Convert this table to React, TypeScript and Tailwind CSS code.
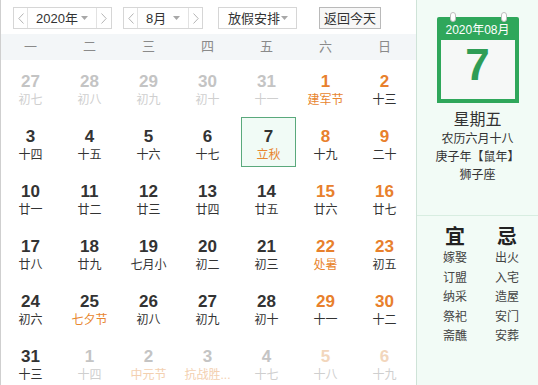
import React from 'react';

type Cell = [number, string, string, string];

// [day, lunar, number style, lunar style]
const rows: Cell[][] = [
  [[27, '初七', 'g', 'g'], [28, '初八', 'g', 'g'], [29, '初九', 'g', 'g'], [30, '初十', 'g', 'g'], [31, '十一', 'g', 'g'], [1, '建军节', 'w', 'f'], [2, '十三', 'w', 'n']],
  [[3, '十四', 'n', 'n'], [4, '十五', 'n', 'n'], [5, '十六', 'n', 'n'], [6, '十七', 'n', 'n'], [7, '立秋', 'n', 'f'], [8, '十九', 'w', 'n'], [9, '二十', 'w', 'n']],
  [[10, '廿一', 'n', 'n'], [11, '廿二', 'n', 'n'], [12, '廿三', 'n', 'n'], [13, '廿四', 'n', 'n'], [14, '廿五', 'n', 'n'], [15, '廿六', 'w', 'n'], [16, '廿七', 'w', 'n']],
  [[17, '廿八', 'n', 'n'], [18, '廿九', 'n', 'n'], [19, '七月小', 'n', 'n'], [20, '初二', 'n', 'n'], [21, '初三', 'n', 'n'], [22, '处暑', 'w', 'f'], [23, '初五', 'w', 'n']],
  [[24, '初六', 'n', 'n'], [25, '七夕节', 'n', 'f'], [26, '初八', 'n', 'n'], [27, '初九', 'n', 'n'], [28, '初十', 'n', 'n'], [29, '十一', 'w', 'n'], [30, '十二', 'w', 'n']],
  [[31, '十三', 'n', 'n'], [1, '十四', 'g', 'g'], [2, '中元节', 'g', 'gf'], [3, '抗战胜...', 'g', 'gf'], [4, '十七', 'g', 'g'], [5, '十八', 'gw', 'g'], [6, '十九', 'gw', 'g']],
];

const numColor: Record<string, string> = {
  n: 'text-[#333333]',
  w: 'text-[#e8802c]',
  g: 'text-[#c4c4c4]',
  gw: 'text-[#f2d6bc]',
};

const lunarColor: Record<string, string> = {
  n: 'text-[#333333]',
  f: 'text-[#e8862f]',
  g: 'text-[#cfcfcf]',
  gf: 'text-[#f3d0b0]',
};

const yi = ['嫁娶', '订盟', '纳采', '祭祀', '斋醮'];
const ji = ['出火', '入宅', '造屋', '安门', '安葬'];

function Chevron({dir}: {dir: 'l' | 'r'}) {
  return (
    <svg width="6" height="11" viewBox="0 0 6 11" fill="none">
      <path d={dir === 'l' ? 'M5.5 0.5 L0.8 5.5 L5.5 10.5' : 'M0.5 0.5 L5.2 5.5 L0.5 10.5'} stroke="#b5b5b5" strokeWidth="1" />
    </svg>
  );
}

function Caret() {
  return (
    <svg width="7" height="4" viewBox="0 0 7 4">
      <path d="M0 0 H7 L3.5 4 Z" fill="#a8a8a8" />
    </svg>
  );
}

function Stepper({label, width, mid}: {label: string; width: string; mid: string}) {
  return (
    <div className={`flex h-[22px] border border-[#d6d6d6] bg-white ${width}`}>
      <div className="flex w-[14px] items-center justify-center border-r border-[#e2e2e2]">
        <Chevron dir="l" />
      </div>
      <div className={`flex items-center justify-between px-[8px] ${mid}`}>
        <span className="text-[13px] leading-none text-[#333]">{label}</span>
        <Caret />
      </div>
      <div className="flex flex-1 items-center justify-center border-l border-[#e2e2e2]">
        <Chevron dir="r" />
      </div>
    </div>
  );
}

function DayCell({cell, today}: {cell: Cell; today: boolean}) {
  const [day, lunar, ns, ls] = cell;
  const inner = (
    <>
      <div className={`text-[17px] font-bold leading-[20px] ${numColor[ns]}`}>{day}</div>
      <div className={`whitespace-nowrap text-[12px] leading-[16px] ${lunarColor[ls]}`}>{lunar}</div>
    </>
  );
  if (today) {
    return (
      <div className="h-[55px] pb-[3px] pl-[4px] pt-[2px]">
        <div className="flex h-full flex-col items-center border border-[#5aa97c] bg-[#f1fbf6] pt-[9px]">{inner}</div>
      </div>
    );
  }
  return <div className="flex h-[55px] flex-col items-center pt-[12px]">{inner}</div>;
}

function CalendarIcon() {
  return (
    <div className="relative mx-auto mt-[17px] w-[82px]">
      <div className="absolute left-[13px] top-[-5px] h-[10px] w-[6px] rounded-full border border-[#bdbdbd] bg-white" />
      <div className="absolute left-[64px] top-[-5px] h-[10px] w-[6px] rounded-full border border-[#bdbdbd] bg-white" />
      <div className="flex h-[23px] items-center justify-center rounded-t-[2px] bg-[#2fa75b] pt-[2px] text-[12px] text-white">2020年08月</div>
      <div className="flex h-[63px] items-start justify-center border-x-[4px] border-b-[4px] border-[#2fa75b] bg-[#f6f8f7]">
        <span className="mt-[3px] text-[44px] font-bold leading-[44px] text-[#2f9d56]">7</span>
      </div>
    </div>
  );
}

export default function App() {
  return (
    <div className="flex h-[385px] w-[538px] overflow-hidden bg-white font-['Liberation_Sans','Noto_Sans_CJK_SC',sans-serif]">
      <div className="w-[416px] shrink-0 border-l border-[#cfcfcf]">
        <div className="flex h-[34px] items-start pl-[12px] pt-[7px]">
          <Stepper label="2020年" width="w-[99px]" mid="w-[68px]" />
          <div className="ml-[11px]">
            <Stepper label="8月" width="w-[80px]" mid="w-[50px]" />
          </div>
          <div className="ml-[15px] flex h-[22px] w-[79px] items-center justify-between border border-[#d6d6d6] bg-white pl-[9px] pr-[8px]">
            <span className="text-[13px] leading-none text-[#333]">放假安排</span>
            <Caret />
          </div>
          <div className="ml-[22px] flex h-[22px] w-[62px] items-center justify-center border border-[#b9b9b9] bg-[#f7f7f7] text-[13px] leading-none text-[#333]">
            返回今天
          </div>
        </div>
        <div className="grid h-[26px] grid-cols-[repeat(7,59px)] items-center bg-[#f3f6f8] text-[13px] text-[#8a8a8a]">
          {['一', '二', '三', '四', '五', '六', '日'].map((d) => (
            <div key={d} className="text-center">{d}</div>
          ))}
        </div>
        <div className="grid grid-cols-[repeat(7,59px)]">
          {rows.map((row, r) =>
            row.map((cell, c) => <DayCell key={`${r}-${c}`} cell={cell} today={r === 1 && c === 4} />)
          )}
        </div>
      </div>
      <div className="flex-1 border-l border-[#cfe3d8] bg-[#f2fbf6] text-[#333]">
        <div className="h-[199px] border-b border-[#d8ede1]">
          <CalendarIcon />
          <div className="mt-[7px] flex flex-col items-center">
            <div className="text-[16px] leading-[20px]">星期五</div>
            <div className="text-[12px] leading-[18px]">农历六月十八</div>
            <div className="text-[12px] leading-[18px]">庚子年【鼠年】</div>
            <div className="text-[12px] leading-[18px]">狮子座</div>
          </div>
        </div>
        <div className="flex gap-[12px] pl-[18px] pt-[9px]">
          {[['宜', yi], ['忌', ji]].map(([head, items]) => (
            <div key={head as string} className="flex w-[40px] flex-col items-center">
              <div className="text-[20px] font-bold leading-[24px] text-[#222]">{head as string}</div>
              {(items as string[]).map((t) => (
                <div key={t} className="text-[12px] leading-[19.5px] text-[#444]">{t}</div>
              ))}
            </div>
          ))}
        </div>
      </div>
    </div>
  );
}
